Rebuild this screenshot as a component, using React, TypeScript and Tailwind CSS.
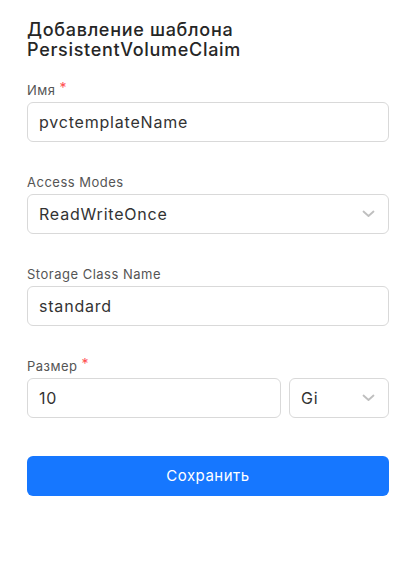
function Label({ text, required }: { text: string; required?: boolean }) {
  return (
    <div className="mb-[3px] flex items-start text-[13px] leading-[18px] tracking-[0.5px] text-[#555]">
      {text}
      {required && <span className="ml-1 text-[14px] leading-[14px] text-[#ff4d4f]">*</span>}
    </div>
  );
}

function Field({ value }: { value: string }) {
  return (
    <div className="flex h-10 items-center rounded-md border border-[#d9d9d9] bg-white px-[11px] text-[16px] tracking-[0.8px] text-[#333]">
      {value}
    </div>
  );
}

function Chevron() {
  return (
    <svg width="13" height="8" viewBox="0 0 13 8" fill="none" className="mr-[2px] text-[#bfbfbf]">
      <path d="M1.5 1.5 6.5 6 11.5 1.5" stroke="currentColor" strokeWidth="1.8" strokeLinecap="round" strokeLinejoin="round" />
    </svg>
  );
}

function Select({ value, className = "" }: { value: string; className?: string }) {
  return (
    <div
      className={
        "flex h-10 items-center justify-between rounded-md border border-[#d9d9d9] bg-white pl-[11px] pr-[11px] text-[16px] tracking-[0.8px] text-[#333] " +
        className
      }
    >
      <span>{value}</span>
      <Chevron />
    </div>
  );
}

export default function App() {
  return (
    <div
      className="h-[567px] w-[418px] bg-white pl-[27px] pt-[20px]"
      style={{ fontFamily: "Inter, 'Noto Sans', sans-serif" }}
    >
      <div className="w-[362px]">
        <h1 className="text-[18px] font-medium leading-[20px] tracking-[0.7px] text-[#262626]">
          Добавление шаблона
          <br />
          PersistentVolumeClaim
        </h1>

        <div className="mt-[21px]">
          <Label text="Имя" required />
          <Field value="pvctemplateName" />
        </div>

        <div className="mt-[31px]">
          <Label text="Access Modes" />
          <Select value="ReadWriteOnce" />
        </div>

        <div className="mt-[31px]">
          <Label text="Storage Class Name" />
          <Field value="standard" />
        </div>

        <div className="mt-[31px]">
          <Label text="Размер" required />
          <div className="flex gap-2">
            <div className="flex-1">
              <Field value="10" />
            </div>
            <Select value="Gi" className="w-[100px]" />
          </div>
        </div>

        <button className="mt-[38px] flex h-10 w-full items-center justify-center rounded-md bg-[#1677ff] text-[15px] tracking-[0.5px] text-white">
          Сохранить
        </button>
      </div>
    </div>
  );
}
